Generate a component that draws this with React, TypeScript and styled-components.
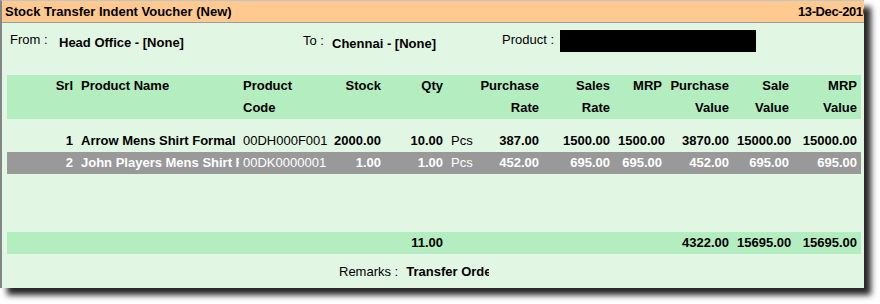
import styled, { createGlobalStyle } from "styled-components";

type Align = "left" | "right";

interface Column {
  key: string;
  width: number;
  align: Align;
  head: string[];
  plain?: boolean;
}

const columns: Column[] = [
  { key: "srl", width: 70, align: "right", head: ["Srl"] },
  { key: "name", width: 162, align: "left", head: ["Product Name"] },
  { key: "code", width: 91, align: "left", head: ["Product", "Code"], plain: true },
  { key: "stock", width: 55, align: "right", head: ["Stock"] },
  { key: "qty", width: 62, align: "right", head: ["Qty"] },
  { key: "unit", width: 28, align: "left", head: [""], plain: true },
  { key: "pRate", width: 68, align: "right", head: ["Purchase", "Rate"] },
  { key: "sRate", width: 71, align: "right", head: ["Sales", "Rate"] },
  { key: "mrp", width: 52, align: "right", head: ["MRP"] },
  { key: "pValue", width: 67, align: "right", head: ["Purchase", "Value"] },
  { key: "sValue", width: 60, align: "right", head: ["Sale", "Value"] },
  { key: "mrpValue", width: 68, align: "right", head: ["MRP", "Value"] },
];

const rows: Record<string, string>[] = [
  {
    srl: "1", name: "Arrow Mens Shirt Formal", code: "00DH000F001", stock: "2000.00", qty: "10.00",
    unit: "Pcs", pRate: "387.00", sRate: "1500.00", mrp: "1500.00", pValue: "3870.00",
    sValue: "15000.00", mrpValue: "15000.00",
  },
  {
    srl: "2", name: "John Players Mens Shirt Formal", code: "00DK0000001", stock: "1.00", qty: "1.00",
    unit: "Pcs", pRate: "452.00", sRate: "695.00", mrp: "695.00", pValue: "452.00",
    sValue: "695.00", mrpValue: "695.00",
  },
];

const totals: Record<string, string> = {
  qty: "11.00",
  pValue: "4322.00",
  sValue: "15695.00",
  mrpValue: "15695.00",
};

const gridTemplate = columns.map((c) => `${c.width}px`).join(" ");

const App = () => {
  return (
    <>
      <GlobalStyle />
      <Window>
        <TitleBar>
          <span>Stock Transfer Indent Voucher (New)</span>
          <DateText>13-Dec-2010</DateText>
        </TitleBar>

        <Fields>
          <Field $width={293}>
            <Label $dy={1.5} $width={49}>From :</Label>
            <Value $dy={4.5}>Head Office - [None]</Value>
          </Field>
          <Field $width={199}>
            <Label $dy={3} $width={29}>To :</Label>
            <Value $dy={6}>Chennai - [None]</Value>
          </Field>
          <Field>
            <Label $dy={1.5} $width={58}>Product :</Label>
            <SearchBox />
          </Field>
        </Fields>

        <Grid>
          <HeadBand>
            {columns.map((c) => (
              <Cell key={c.key} $align={c.align} $bold>
                {c.head.map((line, i) => (
                  <HeadLine key={i}>{line}</HeadLine>
                ))}
              </Cell>
            ))}
          </HeadBand>

          <Body>
            {rows.map((row, i) => (
              <Row key={i} $selected={i === 1}>
                {columns.map((c) => (
                  <Cell key={c.key} $align={c.align} $bold={!c.plain}>
                    {row[c.key]}
                  </Cell>
                ))}
              </Row>
            ))}
          </Body>

          <TotalBand>
            {columns.map((c) => (
              <Cell key={c.key} $align={c.align} $bold>
                {totals[c.key] ?? ""}
              </Cell>
            ))}
          </TotalBand>
        </Grid>

        <Remarks>
          <span>Remarks :</span>
          <RemarkValue>Transfer Order</RemarkValue>
        </Remarks>
      </Window>
    </>
  );
};

const GlobalStyle = createGlobalStyle`
  html, body {
    margin: 0;
    min-height: 304px;
    background: #ffffff;
  }
  body {
    font-family: "Liberation Sans", Arial, sans-serif;
    font-size: 13px;
    color: #000000;
  }
`;

const Window = styled.div`
  width: 862px;
  height: 287px;
  background-color: #e2f6e4;
  border-top: 1px solid #c4c4c4;
  border-left: 2px solid #858585;
  box-shadow: 7px 7px 6px rgba(0, 0, 0, 0.85);
  overflow: hidden;
`;

const TitleBar = styled.div`
  display: flex;
  align-items: center;
  height: 21px;
  padding-left: 3px;
  background-color: #ffc98f;
  border-bottom: 1px solid #9c9c9c;
  font-weight: bold;
  white-space: nowrap;
`;

const DateText = styled.span`
  margin-left: auto;
  width: 66px;
  overflow: hidden;
  letter-spacing: -0.4px;
`;

const Fields = styled.div`
  display: flex;
  align-items: flex-start;
  height: 22px;
  margin-top: 7px;
  padding-left: 8px;
`;

const Field = styled.div<{ $width?: number }>`
  display: flex;
  align-items: flex-start;
  width: ${(p) => (p.$width ? `${p.$width}px` : "auto")};
  white-space: nowrap;
`;

const Label = styled.span<{ $dy: number; $width: number }>`
  width: ${(p) => p.$width}px;
  padding-top: ${(p) => p.$dy}px;
  line-height: 16px;
`;

const Value = styled.span<{ $dy: number }>`
  padding-top: ${(p) => p.$dy}px;
  line-height: 16px;
  font-weight: bold;
`;

const SearchBox = styled.div`
  width: 196px;
  height: 22px;
  background-color: #000000;
`;

const Grid = styled.div`
  margin: 23px 0 0 5px;
  width: 854px;
`;

const HeadBand = styled.div`
  display: grid;
  grid-template-columns: ${gridTemplate};
  height: 44px;
  background-color: #b4edbf;
`;

const HeadLine = styled.div`
  height: 22px;
  line-height: 22px;
`;

const Body = styled.div`
  height: 113px;
  padding-top: 11px;
  box-sizing: border-box;
`;

const Row = styled.div<{ $selected?: boolean }>`
  display: grid;
  grid-template-columns: ${gridTemplate};
  height: 22px;
  line-height: 22px;
  background-color: ${(p) => (p.$selected ? "#999999" : "transparent")};
  color: ${(p) => (p.$selected ? "#ffffff" : "#000000")};
`;

const TotalBand = styled.div`
  display: grid;
  grid-template-columns: ${gridTemplate};
  height: 22px;
  line-height: 22px;
  background-color: #b4edbf;
`;

const Cell = styled.div<{ $align: Align; $bold?: boolean }>`
  padding: 0 4px;
  text-align: ${(p) => p.$align};
  font-weight: ${(p) => (p.$bold ? "bold" : "normal")};
  white-space: nowrap;
  overflow: hidden;
`;

const Remarks = styled.div`
  display: flex;
  gap: 8px;
  margin-top: 10px;
  padding-left: 337px;
  line-height: 16px;
  white-space: nowrap;
`;

const RemarkValue = styled.span`
  width: 83px;
  overflow: hidden;
  font-weight: bold;
`;

export default App;
